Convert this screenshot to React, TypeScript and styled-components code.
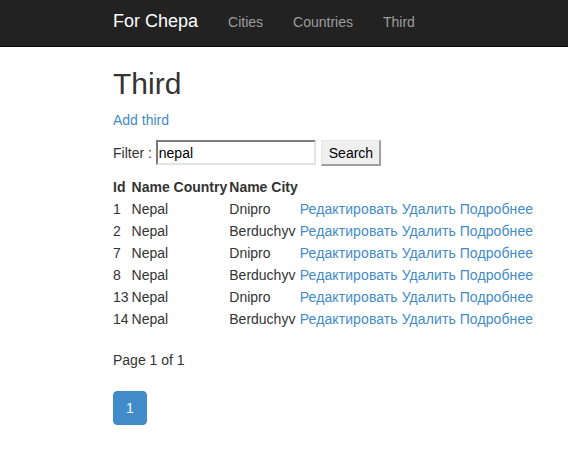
import React from "react";
import styled, { createGlobalStyle } from "styled-components";

const GlobalStyle = createGlobalStyle`
  html, body { margin: 0; padding: 0; background: #fff; }
  body {
    font-family: "Liberation Sans", Arial, sans-serif;
    font-size: 14px;
    line-height: 20px;
    color: #333;
  }
  * { box-sizing: border-box; }
`;

const Navbar = styled.nav`
  background: #222;
  border-bottom: 1px solid #080808;
  height: 47px;
`;

const Container = styled.div`
  margin-left: 98px;
  padding: 0 15px;
  width: 470px;
`;

const NavInner = styled(Container)`
  display: flex;
  align-items: flex-start;
`;

const Brand = styled.a`
  margin-left: -15px;
  padding: 11px 15px;
  font-size: 18px;
  line-height: 20px;
  color: #fff;
  text-decoration: none;
`;

const NavLink = styled.a`
  padding: 12px 15px;
  font-size: 14px;
  line-height: 20px;
  color: #9d9d9d;
  text-decoration: none;
`;

const Title = styled.h2`
  font-size: 30px;
  font-weight: 500;
  line-height: 33px;
  margin: 20px 0 10px;
  color: #333;
`;

const Para = styled.p`
  margin: 0 0 10px;
`;

const Link = styled.a`
  color: #428bca;
  text-decoration: none;
`;

const ActionLink = styled(Link)`
  letter-spacing: 0.1px;
`;

const FilterForm = styled.form`
  display: flex;
  align-items: baseline;
  margin: 0 0 10px;
  white-space: pre;
`;

const FilterInput = styled.input`
  width: 160px;
  height: 25px;
  padding: 1px;
  margin: 0 5px 0 0;
  font-family: "Liberation Sans", Arial, sans-serif;
  font-size: 14px;
  color: #000;
  background: #fff;
  border-style: solid;
  border-width: 2px;
  border-color: #7a7a7a #e3e3e3 #e3e3e3 #7a7a7a;
  outline: none;
`;

const SearchButton = styled.button`
  height: 26px;
  padding: 1px 6px 1px 7px;
  margin: 0;
  font-family: "Liberation Sans", Arial, sans-serif;
  font-size: 14px;
  line-height: 20px;
  color: #000;
  background: #efefef;
  border-style: solid;
  border-width: 1px 2px 2px 1px;
  border-color: #e6e6e6 #a0a0a0 #a0a0a0 #e6e6e6;
`;

const Table = styled.table`
  border-collapse: collapse;
  border-spacing: 0;
  margin: 0 0 20px -1px;
`;

const Th = styled.th<{ $first?: boolean }>`
  padding: 1px ${(p) => (p.$first ? "2px" : "1px")} 1px 1px;
  text-align: left;
  font-weight: bold;
  white-space: nowrap;
`;

const Td = styled.td<{ $first?: boolean }>`
  padding: 1px ${(p) => (p.$first ? "2px" : "1px")} 1px 1px;
  white-space: nowrap;
`;

const Pagination = styled.ul`
  display: flex;
  list-style: none;
  padding: 0;
  margin: 21px 0 20px;
`;

const PageButton = styled.a<{ $active?: boolean }>`
  display: block;
  padding: 6px 12px;
  line-height: 20px;
  border-radius: 4px;
  border: 1px solid ${(p) => (p.$active ? "#428bca" : "#ddd")};
  background: ${(p) => (p.$active ? "#428bca" : "#fff")};
  color: ${(p) => (p.$active ? "#fff" : "#428bca")};
  text-decoration: none;
`;

const rows = [
  { id: 1, country: "Nepal", city: "Dnipro" },
  { id: 2, country: "Nepal", city: "Berduchyv" },
  { id: 7, country: "Nepal", city: "Dnipro" },
  { id: 8, country: "Nepal", city: "Berduchyv" },
  { id: 13, country: "Nepal", city: "Dnipro" },
  { id: 14, country: "Nepal", city: "Berduchyv" },
];

export default function App() {
  return (
    <>
      <GlobalStyle />
      <Navbar>
        <NavInner>
          <Brand href="#">For Chepa</Brand>
          <NavLink href="#">Cities</NavLink>
          <NavLink href="#">Countries</NavLink>
          <NavLink href="#">Third</NavLink>
        </NavInner>
      </Navbar>
      <Container>
        <Title>Third</Title>
        <Para>
          <Link href="#">Add third</Link>
        </Para>
        <FilterForm onSubmit={(e) => e.preventDefault()}>
          <span>Filter : </span>
          <FilterInput defaultValue="nepal" />
          <SearchButton type="submit">Search</SearchButton>
        </FilterForm>
        <Table>
          <thead>
            <tr>
              <Th $first>Id</Th>
              <Th>Name Country</Th>
              <Th>Name City</Th>
              <Th></Th>
            </tr>
          </thead>
          <tbody>
            {rows.map((r) => (
              <tr key={r.id}>
                <Td $first>{r.id}</Td>
                <Td>{r.country}</Td>
                <Td>{r.city}</Td>
                <Td>
                  <ActionLink href="#">Редактировать</ActionLink>{" "}
                  <ActionLink href="#">Удалить</ActionLink>{" "}
                  <ActionLink href="#">Подробнее</ActionLink>
                </Td>
              </tr>
            ))}
          </tbody>
        </Table>
        <div>Page 1 of 1</div>
        <Pagination>
          <li>
            <PageButton href="#" $active>
              1
            </PageButton>
          </li>
        </Pagination>
      </Container>
    </>
  );
}
